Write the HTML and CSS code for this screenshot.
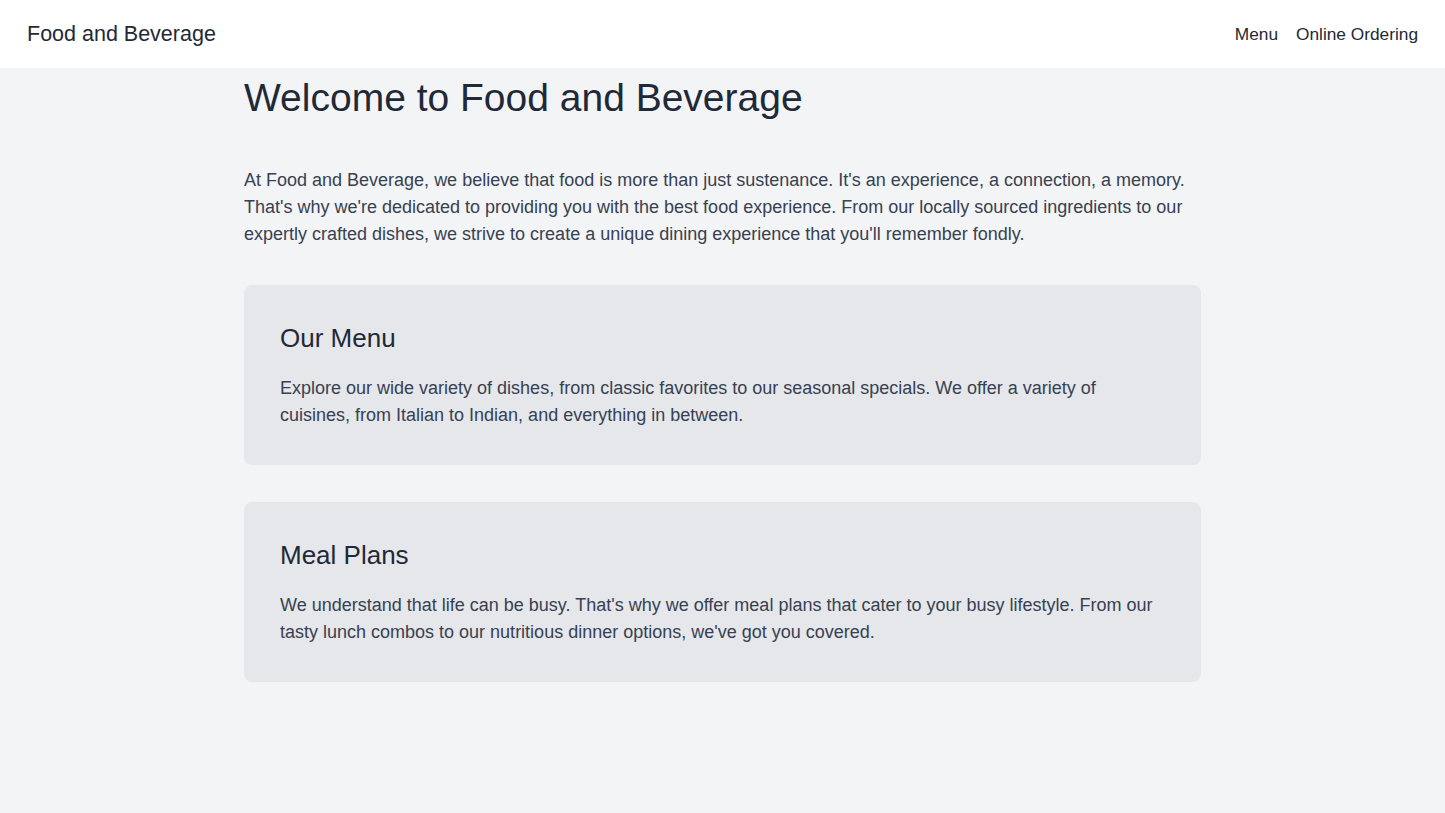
FILE: index.html
```html
<!DOCTYPE html>
<html lang="en">
<head>
<meta charset="utf-8">
<title>Food and Beverage</title>
<link rel="stylesheet" href="styles.css">
</head>
<body>
<header class="topbar">
  <div class="brand">Food and Beverage</div>
  <nav class="nav">
    <a href="#" class="nav-link">Menu</a>
    <a href="#" class="nav-link">Online Ordering</a>
  </nav>
</header>
<main class="main">
  <h1 class="title">Welcome to Food and Beverage</h1>
  <p class="lead">At Food and Beverage, we believe that food is more than just sustenance. It's an experience, a connection, a memory. That's why we're dedicated to providing you with the best food experience. From our locally sourced ingredients to our expertly crafted dishes, we strive to create a unique dining experience that you'll remember fondly.</p>
  <section class="card">
    <h2 class="card-title">Our Menu</h2>
    <p class="card-text">Explore our wide variety of dishes, from classic favorites to our seasonal specials. We offer a variety of cuisines, from Italian to Indian, and everything in between.</p>
  </section>
  <section class="card">
    <h2 class="card-title">Meal Plans</h2>
    <p class="card-text">We understand that life can be busy. That's why we offer meal plans that cater to your busy lifestyle. From our tasty lunch combos to our nutritious dinner options, we've got you covered.</p>
  </section>
</main>
</body>
</html>
```

FILE: styles.css
```css
* { box-sizing: border-box; }
html, body { margin: 0; padding: 0; }
body {
  background: #f3f4f6;
  font-family: "Liberation Sans", Arial, sans-serif;
  color: #1f2937;
  min-height: 813px;
}
.topbar {
  height: 68px;
  background: #ffffff;
  display: flex;
  align-items: center;
  justify-content: space-between;
  padding: 0 27px;
}
.brand {
  font-size: 21.5px;
  color: #1f2937;
}
.nav {
  display: flex;
  gap: 18px;
}
.nav-link {
  font-size: 17.3px;
  color: #1f2937;
  text-decoration: none;
}
.main {
  max-width: 957px;
  margin: 0 auto;
  padding-top: 8px;
}
.title {
  margin: 0;
  font-size: 39px;
  line-height: 44px;
  font-weight: 400;
  color: #1f2937;
}
.lead {
  margin: 47px 0 0;
  font-size: 18px;
  line-height: 27px;
  color: #374151;
}
.card {
  margin-top: 37px;
  background: #e5e7eb;
  border-radius: 8px;
  padding: 37px 36px 36px;
}
.card-title {
  margin: 0;
  font-size: 26px;
  line-height: 32px;
  font-weight: 400;
  color: #1f2937;
}
.card-text {
  margin: 21px 0 0;
  font-size: 18px;
  line-height: 27px;
  color: #374151;
}
```
